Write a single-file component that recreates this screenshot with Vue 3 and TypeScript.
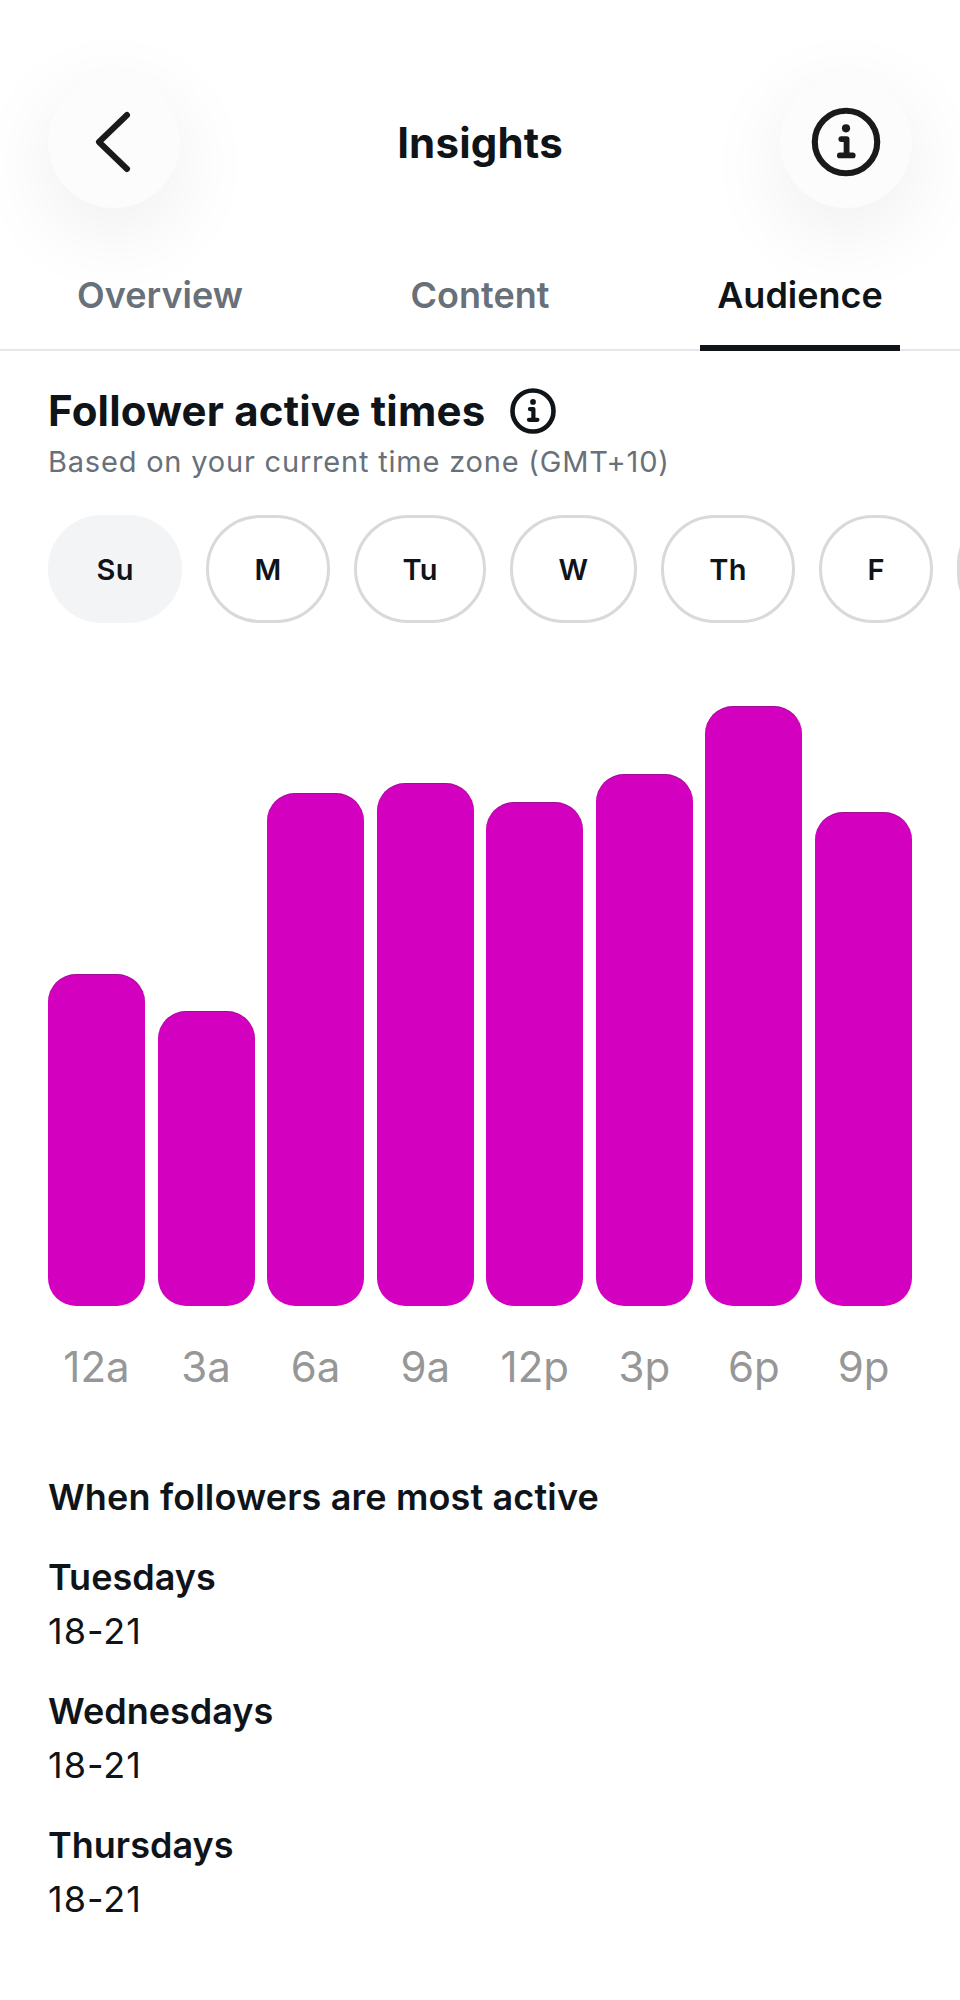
<script setup lang="ts">
const tabs = ['Overview', 'Content', 'Audience']
const days = ['Su', 'M', 'Tu', 'W', 'Th', 'F']
const bars = [
  { label: '12a', height: 332 },
  { label: '3a', height: 295 },
  { label: '6a', height: 513 },
  { label: '9a', height: 523 },
  { label: '12p', height: 504 },
  { label: '3p', height: 532 },
  { label: '6p', height: 600 },
  { label: '9p', height: 494 },
]
const peaks = ['Tuesdays', 'Wednesdays', 'Thursdays']
</script>

<template>
  <div class="page">
    <header class="topbar">
      <button class="round-btn" aria-label="Back">
        <svg class="chevron" width="42" height="64" viewBox="0 0 42 64" fill="none">
          <path d="M36 5 L8 32 L36 59" stroke="#1a1a1a" stroke-width="6" stroke-linecap="round" stroke-linejoin="round" />
        </svg>
      </button>
      <h1 class="title">Insights</h1>
      <button class="round-btn" aria-label="About">
        <svg width="70" height="70" viewBox="0 0 24 24" fill="none">
          <circle cx="12" cy="12" r="10.7" stroke="#1a1a1a" stroke-width="2.1" />
          <circle cx="12" cy="7.3" r="1.4" fill="#1a1a1a" />
          <path d="M10.4 11 H12.2 V16.6 M9.9 16.6 H14.3" stroke="#1a1a1a" stroke-width="2" stroke-linecap="round" stroke-linejoin="round" />
        </svg>
      </button>
    </header>

    <nav class="tabs">
      <div v-for="(tab, i) in tabs" :key="tab" class="tab" :class="{ active: i === 2 }">
        <span>{{ tab }}</span>
      </div>
    </nav>

    <section class="active-times">
      <div class="heading">
        <h2>Follower active times</h2>
        <svg width="46" height="46" viewBox="0 0 24 24" fill="none">
          <circle cx="12" cy="12" r="10.7" stroke="#0f1419" stroke-width="2.4" />
          <circle cx="12" cy="7.3" r="1.5" fill="#0f1419" />
          <path d="M10.4 11 H12.2 V16.6 M9.9 16.6 H14.3" stroke="#0f1419" stroke-width="2.2" stroke-linecap="round" stroke-linejoin="round" />
        </svg>
      </div>
      <p class="zone">Based on your current time zone (GMT+10)</p>

      <div class="days">
        <div v-for="(day, i) in days" :key="day" class="day" :class="{ selected: i === 0 }">{{ day }}</div>
        <!-- Saturday sits past the right edge, only its border shows -->
        <div class="day" aria-label="Sa"></div>
      </div>

      <div class="chart">
        <div v-for="bar in bars" :key="bar.label" class="col">
          <div class="bar" :style="{ height: bar.height + 'px' }"></div>
          <span class="bar-label">{{ bar.label }}</span>
        </div>
      </div>

      <h3 class="peak-title">When followers are most active</h3>
      <div v-for="peak in peaks" :key="peak" class="peak">
        <div class="peak-day">{{ peak }}</div>
        <div class="peak-time">18-21</div>
      </div>
    </section>
  </div>
</template>

<style scoped>
.page {
  width: 960px;
  height: 2000px;
  overflow: hidden;
  background: #fff;
  font-family: Inter, "Liberation Sans", sans-serif;
  color: #0f1419;
}

.topbar {
  display: flex;
  align-items: center;
  justify-content: space-between;
  padding: 76px 48px 0;
}

.round-btn {
  display: flex;
  align-items: center;
  justify-content: center;
  width: 132px;
  height: 132px;
  padding: 0;
  border: 0;
  border-radius: 50%;
  background: #fcfcfc;
  box-shadow: 0 22px 80px 8px rgba(0, 0, 0, 0.06);
}

.chevron {
  margin-right: 5px;
}

.title {
  margin: 0;
  font-size: 42px;
  font-weight: 700;
  letter-spacing: 0.2px;
}

.tabs {
  display: grid;
  grid-template-columns: repeat(3, 1fr);
  height: 143px;
  border-bottom: 2px solid #e5e7eb;
  box-sizing: border-box;
}

.tab {
  display: flex;
  justify-content: center;
  align-items: flex-end;
  margin: 0 60px -2px;
  padding-bottom: 34px;
  font-size: 36px;
  font-weight: 600;
  color: #687079;
}

.tab.active {
  color: #0f1419;
  border-bottom: 6px solid #0f1419;
  padding-bottom: 28px;
}

.active-times {
  padding: 0 48px;
}

.heading {
  display: flex;
  align-items: center;
  gap: 25px;
  margin-top: 36px;
}

.heading h2 {
  margin: 0;
  font-size: 42px;
  font-weight: 700;
  line-height: 48px;
  letter-spacing: 0.2px;
}

.zone {
  margin: 10px 0 0;
  font-size: 29px;
  line-height: 34px;
  letter-spacing: 0.8px;
  color: #687079;
}

.days {
  display: flex;
  gap: 23.8px;
  margin-top: 36px;
  width: 1000px;
}

.day {
  flex: none;
  display: flex;
  align-items: center;
  justify-content: center;
  height: 108px;
  padding: 0 45.5px;
  box-sizing: border-box;
  border: 3px solid #d9d9d9;
  border-radius: 54px;
  font-size: 29px;
  font-weight: 600;
  letter-spacing: 0.3px;
}

.day.selected {
  background: #f3f4f6;
  border-color: #f3f4f6;
}

.chart {
  display: flex;
  align-items: flex-end;
  gap: 12.6px;
  height: 683px;
  margin-top: 83px;
}

.col {
  flex: 1;
  display: flex;
  flex-direction: column;
  align-items: center;
}

.bar {
  width: 100%;
  border-radius: 28px;
  background: #d400c0;
  box-shadow: inset 0 1px 0 rgba(60, 40, 70, 0.35);
}

.bar-label {
  margin-top: 39px;
  font-size: 42px;
  line-height: 44px;
  color: #979797;
}

.peak-title {
  margin: 87px 0 0;
  font-size: 36px;
  font-weight: 600;
  line-height: 42px;
  letter-spacing: 0.15px;
}

.peak {
  margin-top: 38px;
}

.peak-day {
  font-size: 36px;
  font-weight: 600;
  line-height: 42px;
}

.peak-time {
  margin-top: 12px;
  font-size: 36px;
  line-height: 42px;
  letter-spacing: 1px;
}
</style>
